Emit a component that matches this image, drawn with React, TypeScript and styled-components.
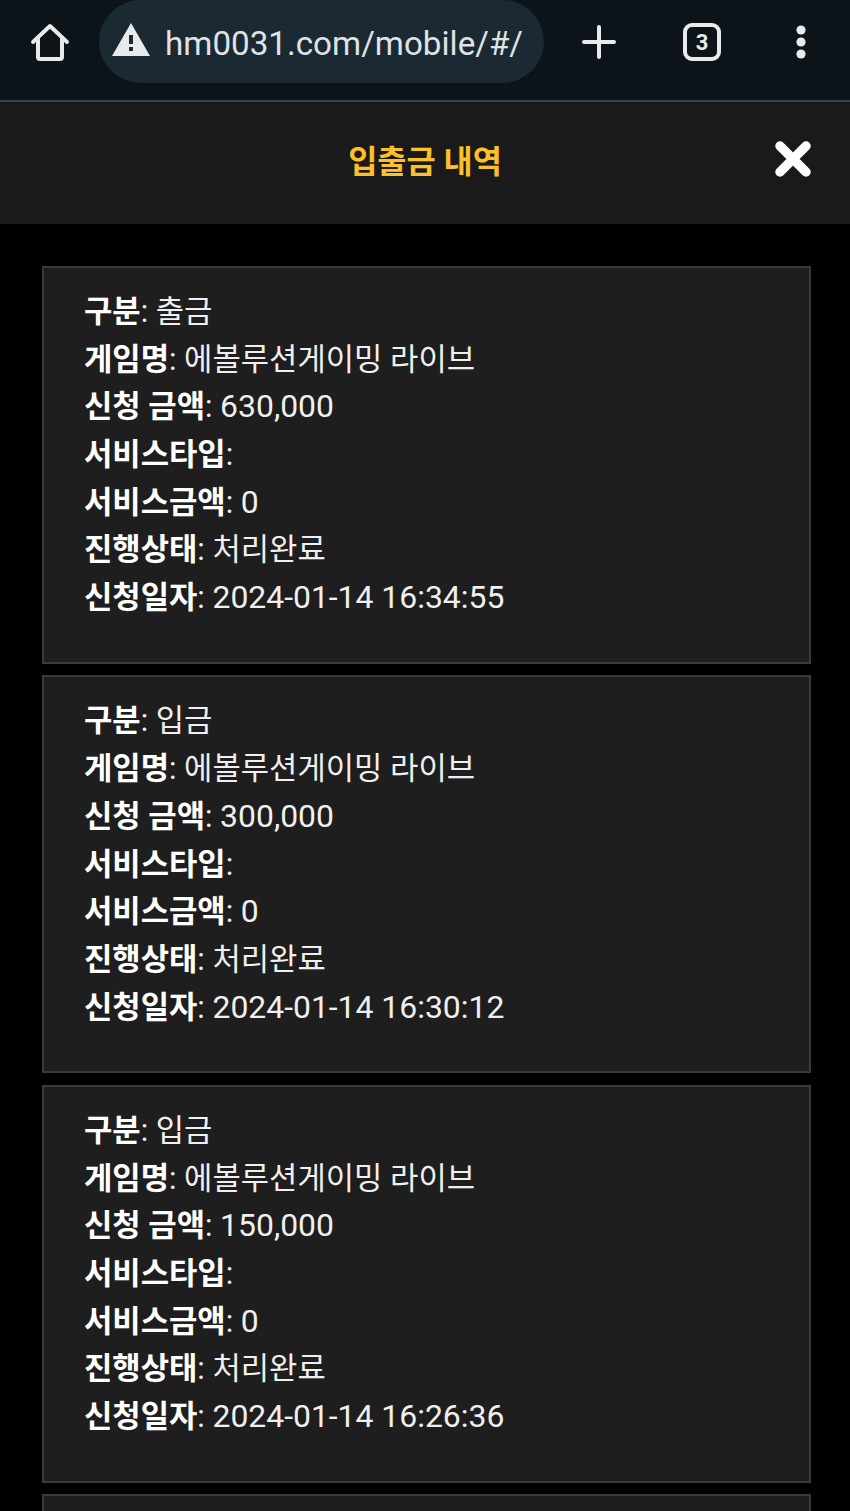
import React from "react";
import styled, { createGlobalStyle } from "styled-components";

const GlobalStyle = createGlobalStyle`
  html, body {
    margin: 0;
    height: 1511px;
    overflow: hidden;
    background: #000;
  }
  * {
    box-sizing: border-box;
  }
`;

const FONT = `Roboto, "Noto Sans CJK KR", sans-serif`;

const Page = styled.div`
  width: 850px;
  height: 1511px;
  overflow: hidden;
  background: #000;
  font-family: ${FONT};
`;

const BrowserBar = styled.div`
  display: flex;
  align-items: flex-start;
  height: 102px;
  background: #0c1319;
  border-bottom: 2px solid #3d434b;
`;

const IconSlot = styled.div<{ $width: number }>`
  display: flex;
  align-items: center;
  justify-content: center;
  flex: none;
  width: ${(props) => props.$width}px;
  height: 84px;
`;

const UrlPill = styled.div`
  display: flex;
  align-items: center;
  flex: none;
  width: 445px;
  height: 83px;
  padding-left: 13px;
  border-radius: 42px;
  background: #1b2933;
`;

const WarningSlot = styled.div`
  display: flex;
  flex: none;
  margin-bottom: 4px;
`;

const UrlText = styled.span`
  margin: 4px 0 0 15px;
  color: #dfe3e6;
  font-size: 33.2px;
  white-space: nowrap;
`;

const ModalHeader = styled.div`
  display: flex;
  align-items: center;
  justify-content: center;
  position: relative;
  height: 122px;
  background: #1a1a1a;
`;

const Title = styled.h1`
  margin: 0 0 9px;
  color: #fdc029;
  font-size: 31.7px;
  font-weight: 700;
`;

const CloseButton = styled.div`
  position: absolute;
  top: 39px;
  right: 39px;
  width: 36px;
  height: 36px;
`;

const CardList = styled.div`
  display: flex;
  flex-direction: column;
  gap: 11.5px;
  padding: 41.7px 39px 0 42px;
`;

const Card = styled.div`
  flex: none;
  height: 398px;
  padding: 20.3px 40px 0;
  background: #1e1e1e;
  border: 2px solid #3a3a3a;
`;

const Row = styled.div`
  height: 47.7px;
  color: #f0f0f0;
  font-size: 30.8px;
  line-height: 47.7px;
  white-space: nowrap;
`;

const Label = styled.b`
  color: #fff;
  font-weight: 700;
`;

const Digits = styled.span`
  font-size: 31.9px;
`;

type Deposit = {
  kind: string;
  amount: string;
  date: string;
};

const deposits: Deposit[] = [
  { kind: "출금", amount: "630,000", date: "2024-01-14 16:34:55" },
  { kind: "입금", amount: "300,000", date: "2024-01-14 16:30:12" },
  { kind: "입금", amount: "150,000", date: "2024-01-14 16:26:36" },
];

const HomeIcon = () => (
  <svg width="40" height="40" viewBox="0 0 40 40" fill="none" stroke="#e8eaec" strokeWidth="4" strokeLinejoin="round" strokeLinecap="round">
    <path d="M3 20 L20 4 L37 20 M8 16 V35 a2 2 0 0 0 2 2 H30 a2 2 0 0 0 2 -2 V16" />
  </svg>
);

const WarningIcon = () => (
  <svg width="38" height="34" viewBox="0 0 38 34">
    <path fillRule="evenodd" fill="#e8eaec" d="M19 0 L38 33 H0 Z M17 12 V21 H21 V12 Z M17 24 V28 H21 V24 Z" />
  </svg>
);

const PlusIcon = () => (
  <svg width="34" height="34" viewBox="0 0 34 34" stroke="#e8eaec" strokeWidth="4" strokeLinecap="round">
    <path d="M17 2 V32 M2 17 H32" />
  </svg>
);

const TabsIcon = () => (
  <svg width="38" height="38" viewBox="0 0 38 38">
    <rect x="2" y="2" width="34" height="34" rx="7" fill="none" stroke="#e8eaec" strokeWidth="4" />
    <text x="19" y="26.5" textAnchor="middle" fill="#e8eaec" fontFamily="Roboto, sans-serif" fontSize="22" fontWeight="700">3</text>
  </svg>
);

const MoreIcon = () => (
  <svg width="12" height="34" viewBox="0 0 12 34" fill="#e8eaec">
    <circle cx="6" cy="5" r="4.6" />
    <circle cx="6" cy="17" r="4.6" />
    <circle cx="6" cy="29" r="4.6" />
  </svg>
);

const CloseIcon = () => (
  <svg width="36" height="36" viewBox="0 0 36 36" stroke="#fff" strokeWidth="9.5" strokeLinecap="round">
    <path d="M5 5 L31 31 M31 5 L5 31" />
  </svg>
);

const App: React.FC = () => {
  return (
    <Page>
      <GlobalStyle />
      <BrowserBar>
        <IconSlot $width={99}>
          <HomeIcon />
        </IconSlot>
        <UrlPill>
          <WarningSlot>
            <WarningIcon />
          </WarningSlot>
          <UrlText>hm0031.com/mobile/#/</UrlText>
        </UrlPill>
        <IconSlot $width={109}>
          <PlusIcon />
        </IconSlot>
        <IconSlot $width={98}>
          <TabsIcon />
        </IconSlot>
        <IconSlot $width={99}>
          <MoreIcon />
        </IconSlot>
      </BrowserBar>
      <ModalHeader>
        <Title>입출금 내역</Title>
        <CloseButton>
          <CloseIcon />
        </CloseButton>
      </ModalHeader>
      <CardList>
        {deposits.map((item) => (
          <Card key={item.date}>
            <Row><Label>구분</Label>: {item.kind}</Row>
            <Row><Label>게임명</Label>: 에볼루션게이밍 라이브</Row>
            <Row><Label>신청 금액</Label>: <Digits>{item.amount}</Digits></Row>
            <Row><Label>서비스타입</Label>:</Row>
            <Row><Label>서비스금액</Label>: <Digits>0</Digits></Row>
            <Row><Label>진행상태</Label>: 처리완료</Row>
            <Row><Label>신청일자</Label>: <Digits>{item.date}</Digits></Row>
          </Card>
        ))}
        <Card />
      </CardList>
    </Page>
  );
};

export default App;
